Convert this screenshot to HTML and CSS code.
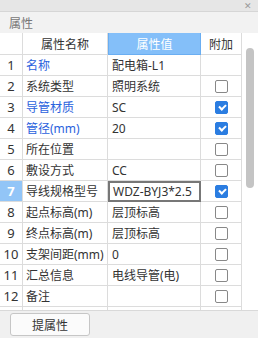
FILE: index.html
```html
<!DOCTYPE html>
<html lang="zh-CN">
<head>
    <meta charset="UTF-8">
    <title>属性</title>
    <link rel="stylesheet" href="styles.css">
</head>
<body>
    <div class="panel">
        <div class="titlebar"><span class="close">&#x2715;</span></div>
        <div class="panel-head">属性</div>
        <div class="grid-wrap">
            <div class="grid">
                <div class="cell hd"></div>
                <div class="cell hd">属性名称</div>
                <div class="cell hd active">属性值</div>
                <div class="cell hd">附加</div>

                <div class="cell idx">1</div>
                <div class="cell name link">名称</div>
                <div class="cell val">配电箱-L1</div>
                <div class="cell chk"></div>

                <div class="cell idx">2</div>
                <div class="cell name">系统类型</div>
                <div class="cell val">照明系统</div>
                <div class="cell chk"><span class="box"></span></div>

                <div class="cell idx">3</div>
                <div class="cell name link">导管材质</div>
                <div class="cell val">SC</div>
                <div class="cell chk"><span class="box on"></span></div>

                <div class="cell idx">4</div>
                <div class="cell name link">管径(mm)</div>
                <div class="cell val">20</div>
                <div class="cell chk"><span class="box on"></span></div>

                <div class="cell idx">5</div>
                <div class="cell name">所在位置</div>
                <div class="cell val"></div>
                <div class="cell chk"><span class="box"></span></div>

                <div class="cell idx">6</div>
                <div class="cell name">敷设方式</div>
                <div class="cell val">CC</div>
                <div class="cell chk"><span class="box"></span></div>

                <div class="cell idx sel">7</div>
                <div class="cell name">导线规格型号</div>
                <div class="cell val edit">WDZ-BYJ3*2.5</div>
                <div class="cell chk"><span class="box on"></span></div>

                <div class="cell idx">8</div>
                <div class="cell name">起点标高(m)</div>
                <div class="cell val">层顶标高</div>
                <div class="cell chk"><span class="box"></span></div>

                <div class="cell idx">9</div>
                <div class="cell name">终点标高(m)</div>
                <div class="cell val">层顶标高</div>
                <div class="cell chk"><span class="box"></span></div>

                <div class="cell idx">10</div>
                <div class="cell name">支架间距(mm)</div>
                <div class="cell val">0</div>
                <div class="cell chk"><span class="box"></span></div>

                <div class="cell idx">11</div>
                <div class="cell name">汇总信息</div>
                <div class="cell val">电线导管(电)</div>
                <div class="cell chk"><span class="box"></span></div>

                <div class="cell idx">12</div>
                <div class="cell name">备注</div>
                <div class="cell val"></div>
                <div class="cell chk"><span class="box"></span></div>

                <div class="cell idx"></div>
                <div class="cell name"></div>
                <div class="cell val"></div>
                <div class="cell chk"></div>
            </div>
            <div class="scrollbar"><div class="thumb"></div></div>
        </div>
        <div class="footer">
            <button class="btn">提属性</button>
        </div>
    </div>
</body>
</html>
```

FILE: styles.css
```css
* {
    box-sizing: border-box;
}

body {
    margin: 0;
    width: 258px;
    height: 338px;
    overflow: hidden;
    background: #f0f0f0;
    font-family: "Noto Sans", "Noto Sans CJK SC", sans-serif;
    font-size: 12px;
    color: #333;
}

.panel {
    display: flex;
    flex-direction: column;
    height: 338px;
}

.titlebar {
    height: 12px;
    background: #e6e6e6;
    border-bottom: 1px solid #d6d6d6;
    display: flex;
    justify-content: flex-end;
    align-items: center;
    padding-right: 6px;
}

.close {
    font-size: 9px;
    color: #999;
    line-height: 1;
}

.panel-head {
    height: 21px;
    background: #f2f2f2;
    color: #777;
    padding-left: 9px;
    display: flex;
    align-items: center;
    font-family: "Noto Sans CJK SC", sans-serif;
}

.grid-wrap {
    display: flex;
    height: 278px;
    background: #fff;
    border-bottom: 1px solid #d9d9d9;
    overflow: hidden;
}

.grid {
    display: grid;
    grid-template-columns: 23px 85px 93px 41px;
    grid-template-rows: 22px;
    grid-auto-rows: 21px;
    width: 242px;
    align-content: start;
}

.cell {
    border-right: 1px solid #dcdcdc;
    border-bottom: 1px solid #dcdcdc;
    display: flex;
    align-items: center;
    white-space: nowrap;
    overflow: hidden;
}

.hd {
    justify-content: center;
    color: #333;
}

.hd.active {
    background: #84bff9;
    border: 1px solid #6aaef2;
    border-top: none;
    color: #fff;
}

.idx {
    justify-content: center;
    font-size: 13px;
    color: #333;
}

.idx.sel {
    background: #92c5f7;
    color: #fff;
    font-weight: bold;
}

.name {
    padding-left: 3px;
}

.link {
    color: #2a62dd;
}

.val {
    padding-left: 4px;
}

.val.edit {
    border: 2px solid #777;
    padding-left: 3px;
}

.chk {
    justify-content: center;
}

.box {
    width: 13px;
    height: 13px;
    border: 1px solid #888;
    border-radius: 2px;
    background: #fff;
    position: relative;
}

.box.on {
    background: #2b7de1;
    border-color: #2b7de1;
}

.box.on::after {
    content: "";
    position: absolute;
    left: 3px;
    top: 2px;
    width: 5px;
    height: 3px;
    border-left: 2px solid #fff;
    border-bottom: 2px solid #fff;
    transform: rotate(-45deg);
}

.scrollbar {
    flex: 1;
    padding: 15px 0 0 4px;
}

.thumb {
    width: 8px;
    height: 140px;
    border-radius: 4px;
    background: #c4c4c4;
}

.footer {
    padding: 2px 0 0 10px;
}

.btn {
    width: 80px;
    height: 23px;
    border: 1px solid #c6c6c6;
    border-radius: 3px;
    background: #fbfbfb;
    font-family: "Noto Sans CJK SC", sans-serif;
    font-size: 12px;
    color: #333;
    padding: 0;
}
```
